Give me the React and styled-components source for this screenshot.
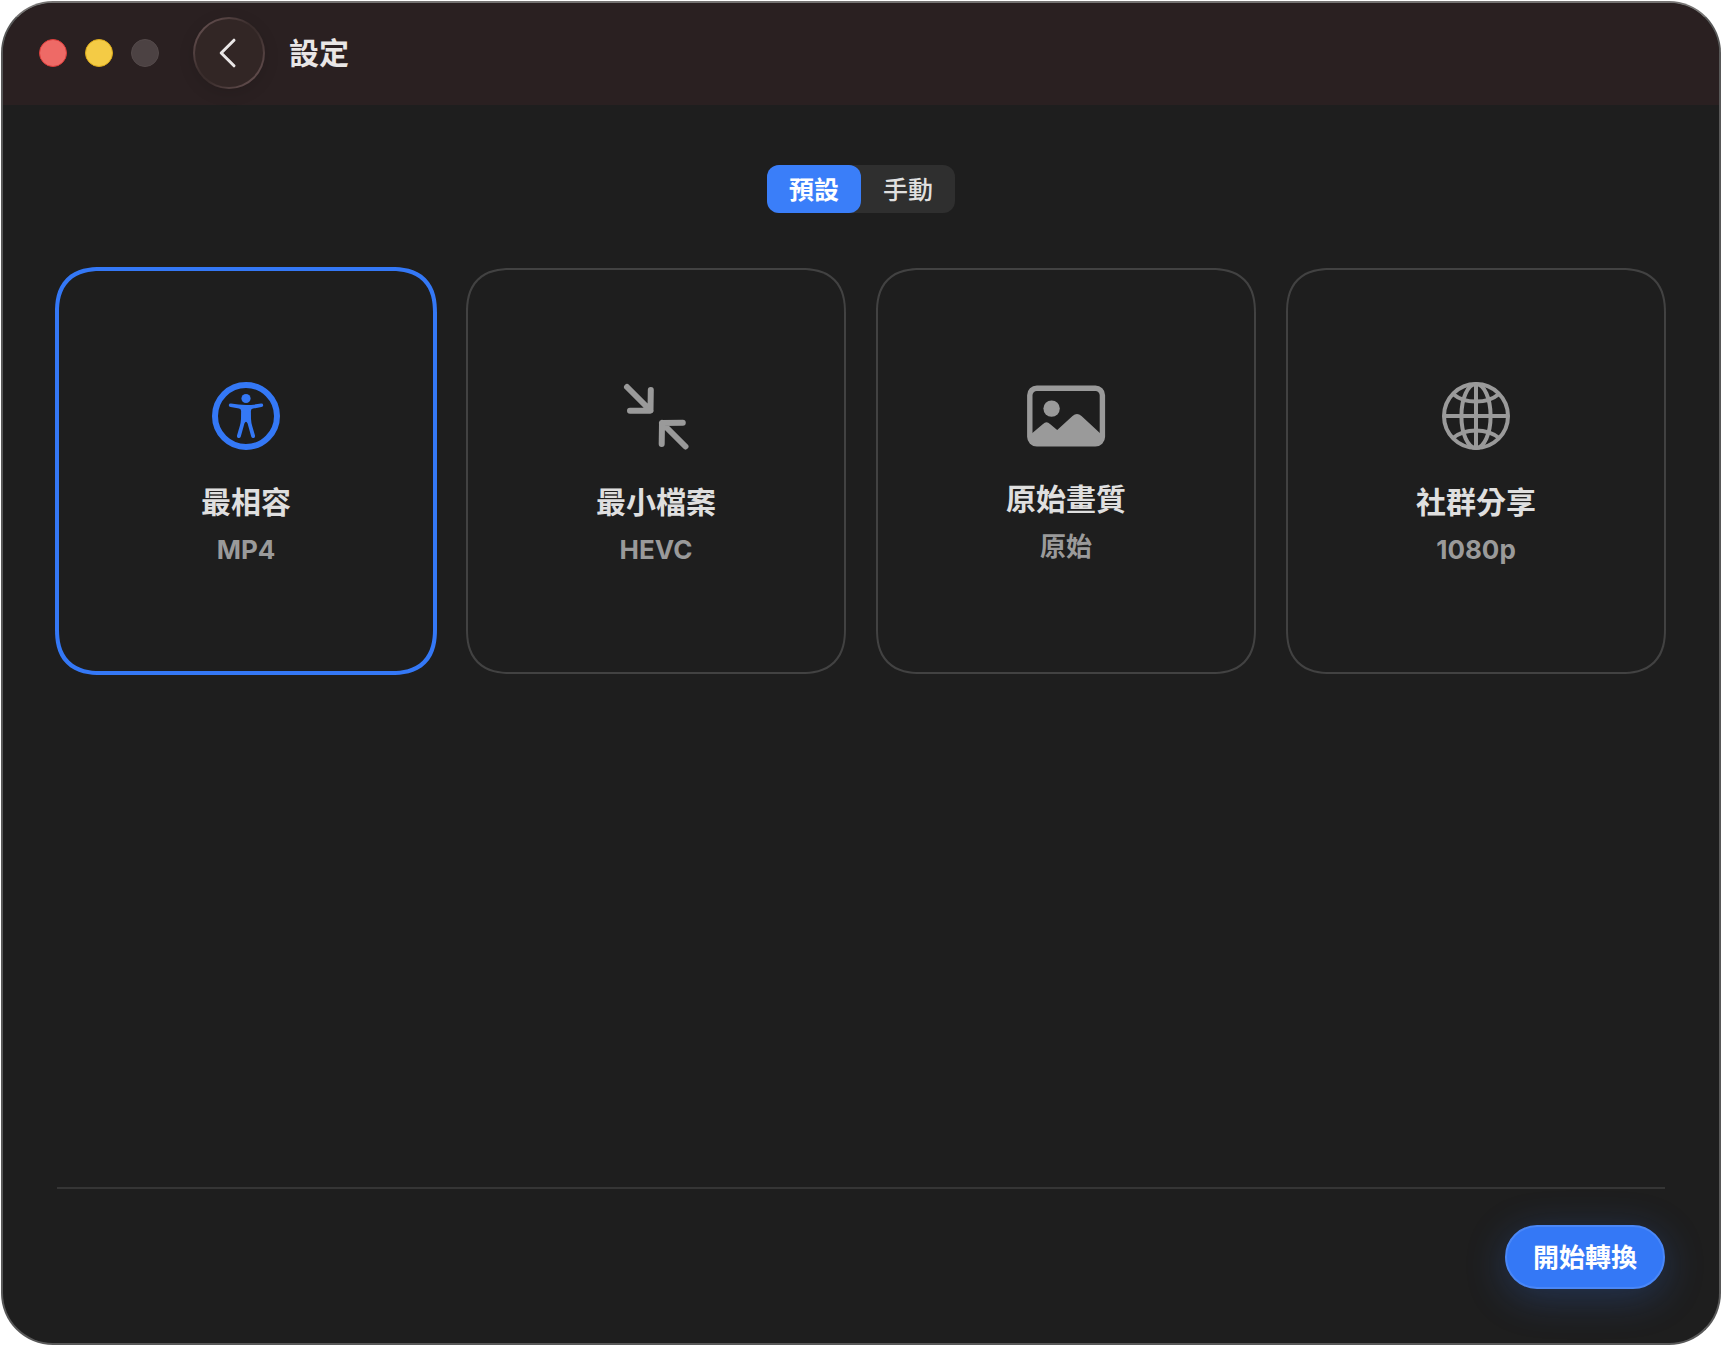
import React, { useState } from "react";
import styled, { createGlobalStyle } from "styled-components";

const GlobalStyle = createGlobalStyle`
  * {
    box-sizing: border-box;
  }
  body {
    margin: 0;
    background: #ffffff;
    font-family: Inter, "Noto Sans CJK TC", sans-serif;
    color: #dfdfdf;
  }
  button {
    font-family: inherit;
    cursor: pointer;
  }
`;

const presets = [
  { id: "compatible", title: "最相容", detail: "MP4", Icon: AccessibilityIcon },
  { id: "smallest", title: "最小檔案", detail: "HEVC", Icon: ShrinkIcon },
  { id: "original", title: "原始畫質", detail: "原始", Icon: PhotoIcon },
  { id: "social", title: "社群分享", detail: "1080p", Icon: GlobeIcon },
];

const modes = [
  { id: "preset", label: "預設" },
  { id: "manual", label: "手動" },
];

export default function App() {
  const [mode, setMode] = useState("preset");
  const [selected, setSelected] = useState("compatible");

  return (
    <Page>
      <GlobalStyle />
      <Window>
        <TitleBar>
          <Lights>
            <Light type="button" aria-label="關閉" $fill="#ee6a66" $edge="#dc3d3b" />
            <Light type="button" aria-label="縮到最小" $fill="#f4cb45" $edge="#dcab1c" />
            <Light type="button" aria-label="縮放" $fill="#4c4243" $edge="#544a4b" disabled />
          </Lights>
          <BackButton type="button" aria-label="返回">
            <svg width="18" height="30" viewBox="0 0 18 30" fill="none">
              <path
                d="M15 2.2 L2.2 15 L15 27.8"
                stroke="#e9e6e6"
                strokeWidth="3"
                strokeLinecap="round"
                strokeLinejoin="round"
              />
            </svg>
          </BackButton>
          <Title>設定</Title>
        </TitleBar>

        <Content>
          <Segmented>
            {modes.map((item) => (
              <Segment
                key={item.id}
                type="button"
                aria-pressed={mode === item.id}
                $active={mode === item.id}
                onClick={() => setMode(item.id)}
              >
                {item.label}
              </Segment>
            ))}
          </Segmented>

          <Cards>
            {presets.map(({ id, title, detail, Icon }) => (
              <Card
                key={id}
                type="button"
                aria-pressed={selected === id}
                $active={selected === id}
                onClick={() => setSelected(id)}
              >
                <Icon />
                <CardTitle>{title}</CardTitle>
                <CardDetail>{detail}</CardDetail>
              </Card>
            ))}
          </Cards>

          <Footer>
            <StartButton type="button">開始轉換</StartButton>
          </Footer>
        </Content>
      </Window>
    </Page>
  );
}

function AccessibilityIcon() {
  return (
    <svg width="68" height="68" viewBox="0 0 68 68" fill="none">
      <circle cx="34" cy="34" r="31" stroke="currentColor" strokeWidth="6" />
      <circle cx="34" cy="16.5" r="4.6" fill="currentColor" />
      <path
        d="M19 21.6 Q34 24.4 49 21.6 Q51 21.4 51.2 23 Q51.3 24.7 49.4 25.1 L41 26.6 Q38.9 27 38.9 29 L39 37 Q39.2 40.5 40.2 44 L43 53.6 Q43.3 55.5 41.6 56 Q39.8 56.3 39.2 54.4 L35.6 41.6 Q34 38 32.4 41.6 L28.8 54.4 Q28.2 56.3 26.4 56 Q24.7 55.5 25 53.6 L27.8 44 Q28.8 40.5 29 37 L29.1 29 Q29.1 27 27 26.6 L18.6 25.1 Q16.7 24.7 16.8 23 Q17 21.4 19 21.6 Z"
        fill="currentColor"
      />
    </svg>
  );
}

function ShrinkIcon() {
  return (
    <svg
      width="68"
      height="68"
      viewBox="0 0 68 68"
      fill="none"
      stroke="currentColor"
      strokeWidth="6"
      strokeLinecap="round"
      strokeLinejoin="round"
    >
      <path d="M5 5 L28.5 28.5 M28.8 8 L28.5 28.5 L8 28.8" />
      <path d="M63.5 64.5 L40 41 M39.7 62 L40 41 L60.8 40.8" />
    </svg>
  );
}

function PhotoIcon() {
  return (
    <svg width="80" height="62" viewBox="0 0 80 62" fill="none">
      <rect x="3.8" y="3.2" width="72.6" height="55.6" rx="7" stroke="currentColor" strokeWidth="5.4" />
      <circle cx="25.6" cy="23.6" r="8.2" fill="currentColor" />
      <path
        d="M4 50 L17 39 Q20.5 35.6 24 39 L31.2 45 L46.5 31 Q51 27.2 55.5 31 L76 50 L76 56 Q76 59 72 59 L8 59 Q4 59 4 56 Z"
        fill="currentColor"
      />
    </svg>
  );
}

function GlobeIcon() {
  return (
    <svg
      width="68"
      height="68"
      viewBox="0 0 68 68"
      fill="none"
      stroke="currentColor"
      strokeWidth="4"
    >
      <circle cx="34" cy="34" r="32" />
      <ellipse cx="34" cy="34" rx="14.6" ry="32" />
      <path d="M34 2 V66 M2 34 H66" />
      <path d="M11 12 Q20 19.6 34 19.6 Q48 19.6 57 12" />
      <path d="M11 56 Q20 48.4 34 48.4 Q48 48.4 57 56" />
    </svg>
  );
}

const Page = styled.div`
  display: flex;
  min-height: 100vh;
  padding: 1px 0 0 1px;
`;

const Window = styled.main`
  flex: 1;
  display: flex;
  flex-direction: column;
  overflow: hidden;
  background: #1e1e1e;
  border: 2px solid #585858;
  border-top-color: #767473;
  border-radius: 52px;
`;

const TitleBar = styled.header`
  display: flex;
  align-items: center;
  height: 102px;
  padding: 0 36px 2px;
  background: #2a2021;
`;

const Lights = styled.div`
  display: flex;
  gap: 18px;
  margin-right: 34px;
`;

const Light = styled.button`
  width: 28px;
  height: 28px;
  padding: 0;
  border: 1px solid ${(props) => props.$edge};
  border-radius: 50%;
  background: ${(props) => props.$fill};
`;

const BackButton = styled.button`
  display: flex;
  align-items: center;
  justify-content: center;
  width: 72px;
  height: 72px;
  padding: 0 2px 0 0;
  border: 2px solid transparent;
  border-radius: 50%;
  background:
    linear-gradient(#322625, #322625) padding-box,
    linear-gradient(135deg, #5e4a4a 15%, #3a2d2c 45%, #3a2d2c 55%, #5e4a4a 85%) border-box;
  box-shadow: 0 4px 16px rgba(0, 0, 0, 0.12);
`;

const Title = styled.h1`
  margin: 0 0 0 24px;
  font-size: 30px;
  font-weight: 700;
  line-height: 36px;
  color: #e9e6e6;
`;

const Content = styled.div`
  flex: 1;
  display: flex;
  flex-direction: column;
  padding: 60px 54px 54px;
`;

const Segmented = styled.div`
  display: flex;
  align-self: center;
  border-radius: 12px;
  background: #2f2f2f;
`;

const Segment = styled.button`
  width: 94px;
  height: 48px;
  padding: 0 0 2px;
  border: 0;
  border-radius: 12px;
  background: ${(props) => (props.$active ? "#3a7ef9" : "transparent")};
  color: ${(props) => (props.$active ? "#ffffff" : "#dfdfdf")};
  font-size: 25px;
  font-weight: ${(props) => (props.$active ? 700 : 500)};
`;

const Cards = styled.div`
  display: grid;
  grid-template-columns: repeat(4, 1fr);
  gap: 32px;
  margin-top: 56px;
`;

const Card = styled.button`
  display: flex;
  flex-direction: column;
  align-items: center;
  justify-content: center;
  height: 404px;
  padding: 6px 0 0;
  border: 0;
  outline: ${(props) => (props.$active ? "4px solid #3478f6" : "2px solid #424242")};
  outline-offset: ${(props) => (props.$active ? "-2px" : "-1px")};
  border-radius: 38px;
  background: transparent;
  color: ${(props) => (props.$active ? "#3478f6" : "#9a9a9a")};

  @supports (corner-shape: squircle) {
    border-radius: 44px;
    corner-shape: superellipse(1.3);
  }
`;

const CardTitle = styled.span`
  margin-top: 34px;
  font-size: 30px;
  font-weight: 700;
  line-height: 36px;
  color: #dfdfdf;
`;

const CardDetail = styled.span`
  margin-top: 14px;
  font-size: 26px;
  font-weight: 700;
  line-height: 32px;
  color: #9a9a9a;
`;

const Footer = styled.footer`
  display: flex;
  justify-content: flex-end;
  margin-top: auto;
  padding-top: 36px;
  border-top: 2px solid #353535;
`;

const StartButton = styled.button`
  height: 64px;
  padding: 0 26px 3px;
  border: 2px solid #4a87f7;
  border-radius: 32px;
  background: #3478f6;
  box-shadow: 0 8px 40px rgba(52, 120, 246, 0.25);
  color: #ffffff;
  font-size: 26px;
  font-weight: 700;
`;
